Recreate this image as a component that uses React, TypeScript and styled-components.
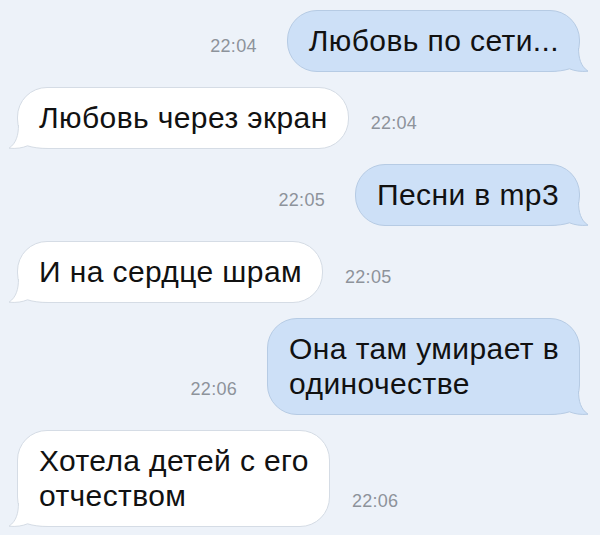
import React from "react";
import styled, { createGlobalStyle } from "styled-components";

const Global = createGlobalStyle`
  html, body { margin: 0; padding: 0; background: #edf2f9; }
  body { width: 600px; height: 535px; overflow: hidden; }
`;

const Page = styled.div`
  width: 600px;
  height: 535px;
  box-sizing: border-box;
  padding: 10px 20px 0 17px;
  display: flex;
  flex-direction: column;
  gap: 15px;
  background: #edf2f9;
  font-family: "Liberation Sans", Arial, sans-serif;
`;

const Row = styled.div<{ $out: boolean }>`
  display: flex;
  flex-direction: ${(p) => (p.$out ? "row-reverse" : "row")};
  align-items: flex-end;
  gap: ${(p) => (p.$out ? "30px" : "22px")};
`;

const Bubble = styled.div<{ $out: boolean }>`
  position: relative;
  box-sizing: border-box;
  padding: 12px 20px 13px 21px;
  border-radius: 30px;
  background: ${(p) => (p.$out ? "#cde0f7" : "#ffffff")};
  border: 1px solid ${(p) => (p.$out ? "#b6cbe4" : "#d5dce5")};
  color: #111;
  font-size: 30px;
  line-height: 35px;
  letter-spacing: 0.4px;
  white-space: pre-line;
`;

const Tail = styled.svg<{ $out: boolean }>`
  position: absolute;
  bottom: -1px;
  width: 40px;
  height: 26px;
  ${(p) => (p.$out ? "right: -10px;" : "left: -10px; transform: scaleX(-1);")}
  overflow: visible;
`;

const Time = styled.span`
  font-size: 18px;
  line-height: 20px;
  color: #8d939b;
  margin-bottom: 16px;
  letter-spacing: 0.3px;
`;

type Msg = { out: boolean; text: string; time: string };

const messages: Msg[] = [
  { out: true, text: "Любовь по сети...", time: "22:04" },
  { out: false, text: "Любовь через экран", time: "22:04" },
  { out: true, text: "Песни в mp3", time: "22:05" },
  { out: false, text: "И на сердце шрам", time: "22:05" },
  { out: true, text: "Она там умирает в\nодиночестве", time: "22:06" },
  { out: false, text: "Хотела детей с его\nотчеством", time: "22:06" },
];

const OUTLINE =
  "M29.5 2 C29.6 12 31.5 20 39 25.2 C32 26 25 24.8 20.5 22.8 C15 24.6 8 25.5 0 25.5";

function BubbleTail({ out }: { out: boolean }) {
  const fill = out ? "#cde0f7" : "#ffffff";
  const stroke = out ? "#b6cbe4" : "#d5dce5";
  return (
    <Tail $out={out} viewBox="0 0 40 26">
      <path d={`${OUTLINE} L0 21 C10 20 20 15 25 2 Z`} fill={fill} />
      <path d={OUTLINE} fill="none" stroke={stroke} strokeWidth="1" />
    </Tail>
  );
}

export default function App() {
  return (
    <>
      <Global />
      <Page>
        {messages.map((m, i) => (
          <Row key={i} $out={m.out}>
            <Bubble $out={m.out}>
              {m.text}
              <BubbleTail out={m.out} />
            </Bubble>
            <Time>{m.time}</Time>
          </Row>
        ))}
      </Page>
    </>
  );
}
